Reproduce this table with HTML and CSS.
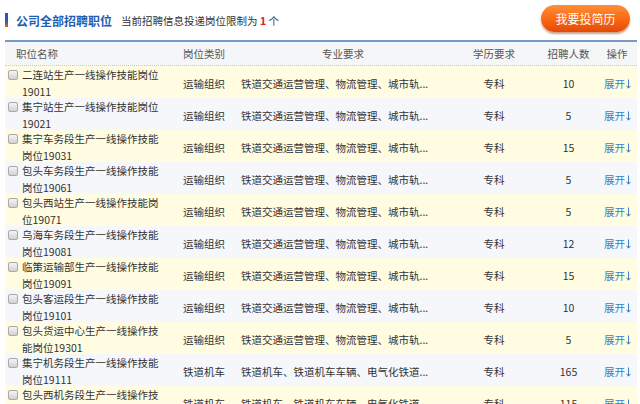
FILE: index.html
```html
<!DOCTYPE html>
<html lang="zh-CN">
<head>
<meta charset="utf-8">
<title>公司全部招聘职位</title>
<link rel="stylesheet" href="styles.css">
</head>
<body>
<div class="page">
  <div class="topbar">
    <div class="title-wrap">
      <span class="title-mark"></span>
      <span class="title">公司全部招聘职位</span>
      <span class="subtitle">当前招聘信息投递岗位限制为 <b class="red">1</b> 个</span>
    </div>
    <a class="apply-btn">我要投简历</a>
  </div>
  <div class="table">
    <div class="row head">
      <div class="c1 hpad">职位名称</div>
      <div class="c2">岗位类别</div>
      <div class="c3 center">专业要求</div>
      <div class="c4">学历要求</div>
      <div class="c5">招聘人数</div>
      <div class="c6">操作</div>
    </div>
    <div id="rows"></div>
  </div>
</div>
<script src="app.js"></script>
</body>
</html>
```
FILE: app.js
```js
const A = "铁道交通运营管理、物流管理、城市轨...";
const B = "铁道机车、铁道机车车辆、电气化铁道...";
const data = [
  ["二连站生产一线操作技能岗位19011","运输组织",A,10],
  ["集宁站生产一线操作技能岗位19021","运输组织",A,5],
  ["集宁车务段生产一线操作技能岗位19031","运输组织",A,15],
  ["包头车务段生产一线操作技能岗位19061","运输组织",A,5],
  ["包头西站生产一线操作技能岗位19071","运输组织",A,5],
  ["乌海车务段生产一线操作技能岗位19081","运输组织",A,12],
  ["临策运输部生产一线操作技能岗位19091","运输组织",A,15],
  ["包头客运段生产一线操作技能岗位19101","运输组织",A,10],
  ["包头货运中心生产一线操作技能岗位19301","运输组织",A,5],
  ["集宁机务段生产一线操作技能岗位19111","铁道机车",B,165],
  ["包头西机务段生产一线操作技能岗位19121","铁道机车",B,115]
];
const box = document.getElementById("rows");
data.forEach((d, i) => {
  const r = document.createElement("div");
  r.className = "row body " + (i % 2 ? "even" : "odd");
  r.innerHTML =
    '<div class="c1"><span class="cb"></span><span class="name">' + d[0] + '</span></div>' +
    '<div class="c2">' + d[1] + '</div>' +
    '<div class="c3">' + d[2] + '</div>' +
    '<div class="c4">专科</div>' +
    '<div class="c5">' + d[3] + '</div>' +
    '<div class="c6"><a class="expand">展开<svg class="arr" width="5" height="10" viewBox="0 0 5 10"><path d="M2.5 0.5V9M0.6 6.8L2.5 9.2L4.4 6.8" fill="none" stroke="#3a7fc7" stroke-width="1"/></svg></a></div>';
  box.appendChild(r);
});
```
FILE: styles.css
```css
html, body {
  margin: 0;
  padding: 0;
  overflow: hidden;
  background: #fff;
}
body {
  font-family: "Noto Sans CJK SC", "Noto Sans", sans-serif;
  color: #333;
  font-size: 10.5px;
}
.page {
  width: 640px;
}
.topbar {
  height: 40px;
  display: flex;
  align-items: flex-start;
  justify-content: space-between;
  padding: 0 10px 0 5px;
  box-sizing: border-box;
}
.title-wrap {
  display: flex;
  align-items: center;
  height: 40px;
}
.title-mark {
  width: 3px;
  height: 14px;
  background: linear-gradient(#1d5cb8 0%, #1d5cb8 55%, #e8601c 100%);
  margin-right: 8px;
}
.title {
  font-size: 12px;
  font-weight: bold;
  color: #1f5fb3;
  margin-right: 9px;
}
.subtitle {
  font-size: 10.5px;
  color: #333;
}
.red {
  color: #e02020;
  font-weight: bold;
}
.apply-btn {
  margin-top: 5px;
  width: 89px;
  height: 27px;
  border-radius: 14px;
  background: linear-gradient(#ff8f3a 0%, #fb6a14 50%, #e24a08 100%);
  box-shadow: 0 2px 2px rgba(140, 50, 0, 0.45);
  color: #fff;
  font-size: 12px;
  display: flex;
  align-items: center;
  justify-content: center;
}
.table {
  margin-left: 5px;
  width: 632px;
  border-top: 2px solid #7799c6;
}
.row {
  display: grid;
  grid-template-columns: 175px 55px 220px 78px 71px 33px;
  align-items: center;
}
.row.head {
  height: 23px;
  background: #f5f6f8;
  color: #555;
  border-bottom: 1px dotted #c9c9c9;
}
.row.body {
  height: 32px;
}
.odd { background: #fffce2; }
.even { background: #f6f7fb; }
.c1 {
  display: flex;
  align-items: flex-start;
  padding-left: 3px;
  line-height: 17px;
}
.hpad { padding-left: 11px; }
.c2 { padding-left: 3px; }
.c3 { padding-left: 6px; white-space: nowrap; }
.c3.center { padding-left: 0; text-align: center; padding-right: 4px; }
.c4, .c5 { text-align: center; }
.c6 { text-align: center; padding-right: 7px; }
.cb {
  width: 8px;
  height: 8px;
  border: 1px solid #a9a9a9;
  border-radius: 2px;
  background: linear-gradient(#f4f4f4, #d2d2d2);
  margin-top: 4px;
  margin-right: 4px;
  flex: none;
}
.name {
  width: 142px;
}
.expand {
  color: #3a7fc7;
  white-space: nowrap;
}
.arr {
  vertical-align: -1px;
  margin-left: 1px;
}
```
